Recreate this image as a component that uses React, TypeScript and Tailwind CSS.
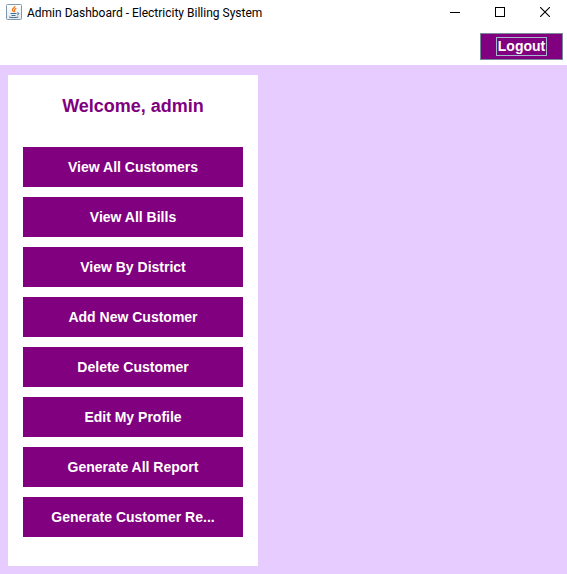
const actions = [
  "View All Customers",
  "View All Bills",
  "View By District",
  "Add New Customer",
  "Delete Customer",
  "Edit My Profile",
  "Generate All Report",
  "Generate Customer Re...",
];

function JavaIcon() {
  return (
    <svg width="16" height="16" viewBox="0 0 16 16" aria-hidden="true" className="shrink-0">
      <defs>
        <linearGradient id="tile" x1="0" y1="0" x2="0" y2="1">
          <stop offset="0" stopColor="#ffffff" />
          <stop offset="1" stopColor="#e3e8ee" />
        </linearGradient>
      </defs>
      <rect x="0.5" y="0.5" width="15" height="15" rx="1" fill="url(#tile)" stroke="#8199ad" />
      <path d="M8.8 2C9.4 3.6 6.2 4.4 6.4 6C6.6 7 7.5 7.2 7.6 8M10.3 4.4C8.8 5 8.1 5.7 8.6 6.6C8.9 7.1 8.8 7.6 8.4 8" fill="none" stroke="#ee7a1c" strokeWidth="1.3" />
      <path d="M4.5 9.5H10.5M5.5 11.5H9.5M11 9C13.6 8.4 13.4 10.6 11.2 11M3.2 13C5 13.8 10 13.8 12.3 13" fill="none" stroke="#3f6c93" />
    </svg>
  );
}

function TitleBar() {
  return (
    <header className="flex h-6 items-center pl-1.5">
      <JavaIcon />
      <h1 className="ml-[5px] flex-1 whitespace-nowrap pt-0.5 font-[Roboto,'Open_Sans',sans-serif] text-xs text-black">
        Admin Dashboard - Electricity Billing System
      </h1>
      <button type="button" aria-label="Minimize" className="flex h-full w-[45px] items-center justify-center">
        <svg width="10" height="10" viewBox="0 0 10 10" shapeRendering="crispEdges">
          <path d="M0 5.5H10" stroke="#000" />
        </svg>
      </button>
      <button type="button" aria-label="Maximize" className="flex h-full w-[45px] items-center justify-center">
        <svg width="10" height="10" viewBox="0 0 10 10" shapeRendering="crispEdges">
          <rect x="0.5" y="0.5" width="9" height="9" fill="none" stroke="#000" />
        </svg>
      </button>
      <button type="button" aria-label="Close" className="flex h-full w-[45px] items-center justify-center">
        <svg width="10" height="10" viewBox="0 0 10 10">
          <path d="M0 0L10 10M10 0L0 10" stroke="#000" strokeWidth="1.1" />
        </svg>
      </button>
    </header>
  );
}

export default function App() {
  return (
    <div className="flex min-h-screen flex-col bg-white font-['Liberation_Sans',Arial,sans-serif]">
      <TitleBar />
      <div className="flex items-start justify-end px-1 pt-[9px] pb-[5px]">
        <button
          type="button"
          className="flex h-[27px] w-[83px] items-center justify-center border border-[#7a8a99] bg-[#800080] text-sm font-bold text-white"
        >
          <span className="border border-[#a3b8cc] px-px leading-[17px]">Logout</span>
        </button>
      </div>
      <main className="flex flex-1 bg-[#e6ccff] px-2 pt-2.5 pb-2">
        <nav aria-label="Admin actions" className="w-[250px] bg-white px-[15px] pt-5 pb-5">
          <h2 className="text-center text-lg leading-[22px] font-bold text-[#800080]">Welcome, admin</h2>
          <ul className="mt-[30px] flex flex-col gap-2.5">
            {actions.map((label) => (
              <li key={label}>
                <button type="button" className="h-10 w-full bg-[#800080] text-sm font-bold text-white">
                  {label}
                </button>
              </li>
            ))}
          </ul>
        </nav>
      </main>
    </div>
  );
}
